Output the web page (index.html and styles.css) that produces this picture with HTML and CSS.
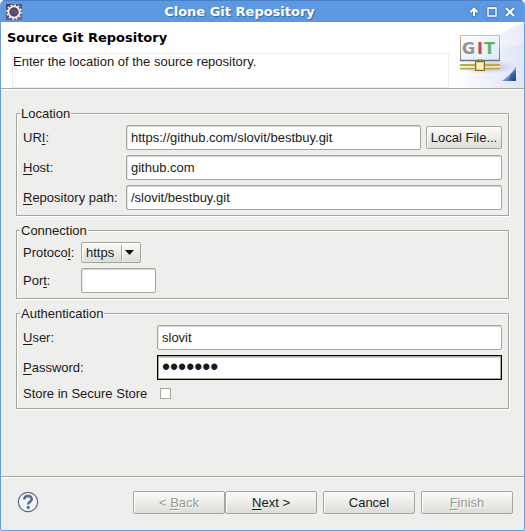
FILE: index.html
```html
<!DOCTYPE html>
<html lang="en">
<head>
<meta charset="utf-8">
<title>Clone Git Repository</title>
<link rel="stylesheet" href="styles.css">
</head>
<body>
<div class="window">
  <header class="titlebar">
    <svg class="app-icon" width="16" height="16" viewBox="0 0 16 16" aria-hidden="true">
      <defs>
        <linearGradient id="app" x1="0" y1="0" x2="1" y2="1">
          <stop offset="0" stop-color="#4a3f68"/><stop offset="1" stop-color="#77609a"/>
        </linearGradient>
      </defs>
      <rect width="16" height="16" fill="url(#app)"/>
      <circle cx="8" cy="8" r="7" fill="none" stroke="#efeaea" stroke-width="1.6" stroke-dasharray="1.9 1.765"/>
      <circle cx="8" cy="8" r="5.6" fill="#51446c" stroke="#f5f1ee" stroke-width="1.7"/>
      <path d="M4.5 6.5h7M4 8h8M4.5 9.6h7" stroke="#6a5a84" stroke-width=".8"/>
    </svg>
    <h1 class="window-title">Clone Git Repository</h1>
    <div class="window-controls">
      <button class="control" type="button" aria-label="Shade"><svg width="10" height="10" viewBox="0 0 10 10"><path d="M5 9V3M1.5 5.2 5 1.7l3.5 3.5" fill="none" stroke="#fff" stroke-width="2"/></svg></button>
      <button class="control" type="button" aria-label="Maximize"><svg width="10" height="10" viewBox="0 0 10 10"><path d="M1 1h8v8H1z" fill="none" stroke="#fff" stroke-width="1.4"/><path d="M1 1.3h8" stroke="#fff" stroke-width="1.6"/></svg></button>
      <button class="control" type="button" aria-label="Close"><svg width="10" height="10" viewBox="0 0 10 10"><path d="m1 1 8 8M9 1 1 9" stroke="#fff" stroke-width="2.2"/></svg></button>
    </div>
  </header>

  <section class="banner">
    <div class="banner-text">
      <h2 class="banner-title">Source Git Repository</h2>
      <p class="banner-message">Enter the location of the source repository.</p>
    </div>
    <svg class="banner-art" width="75" height="66" viewBox="0 0 75 66" role="img" aria-label="Git">
      <defs>
        <linearGradient id="sky" x1="0" y1="0" x2="1" y2="0">
          <stop offset="0" stop-color="#fff"/><stop offset="1" stop-color="#dbe2f5"/>
        </linearGradient>
        <linearGradient id="frame" x1="0" y1="0" x2="0" y2="1">
          <stop offset="0" stop-color="#e3b981"/><stop offset="1" stop-color="#6c8183"/>
        </linearGradient>
        <linearGradient id="panel" x1="0" y1="0" x2="1" y2="1">
          <stop offset="0" stop-color="#fff"/><stop offset="1" stop-color="#dceaf6"/>
        </linearGradient>
        <linearGradient id="fold" x1="0" y1="0" x2="1" y2="1">
          <stop offset=".4" stop-color="#c3d3ea"/><stop offset=".7" stop-color="#5279b4"/><stop offset="1" stop-color="#153d7d"/>
        </linearGradient>
        <radialGradient id="shade">
          <stop offset="0" stop-color="#a798b5" stop-opacity=".75"/><stop offset="1" stop-color="#b9aec8" stop-opacity="0"/>
        </radialGradient>
      </defs>
      <path d="M75 1C52 7 37 25 22 45 16 53 8 60 0 66h75z" fill="url(#sky)" opacity=".65"/>
      <path d="M75 22C53 23 40 35 29 49 23 57 15 62 5 66h70z" fill="url(#sky)" opacity=".75"/>
      <ellipse cx="37" cy="45" rx="31" ry="7" fill="url(#shade)"/>
      <rect x="11.500" y="13.500" width="39" height="25" fill="url(#panel)" stroke="url(#frame)"/>
      <path d="M11 38.500h40" stroke="#667a7c" stroke-width="1.4"/>
      <text class="git" y="32"><tspan x="13" fill="#929292">G</tspan><tspan x="28" fill="#bd4a50">I</tspan><tspan x="35" fill="#63b067">T</tspan></text>
      <path d="M11 43h40M11 46.500h40" stroke="#b5ab45" stroke-width="2"/>
      <path d="M11 45h40" stroke="#fffce4"/>
      <path d="M29.500 37v3M32.500 37v3" stroke="#8b7a30"/>
      <rect x="26.500" y="39.500" width="9" height="9" fill="#fff0b8" stroke="#8a6b24"/>
      <rect x="27.500" y="40.500" width="7" height="7" fill="none" stroke="#edce78"/>
      <path d="M67 44v15H52c6-3 11-8 15-15z" fill="url(#fold)"/>
      <path d="M61 53v5h5.500V48z" fill="#173d7b" opacity=".4"/>
    </svg>
  </section>

  <form class="form">
    <main class="page">
      <fieldset class="group location">
        <legend>Location</legend>
        <label for="uri">UR<u>I</u>:</label>
        <div class="with-button">
          <input class="field" id="uri" type="text" value="https://github.com/slovit/bestbuy.git">
          <button class="button compact" type="button">Local File...</button>
        </div>
        <label for="host"><u>H</u>ost:</label>
        <input class="field" id="host" type="text" value="github.com">
        <label for="path"><u>R</u>epository path:</label>
        <input class="field" id="path" type="text" value="/slovit/bestbuy.git">
      </fieldset>

      <fieldset class="group connection">
        <legend>Connection</legend>
        <label for="protocol">Protoco<u>l</u>:</label>
        <div class="picker">
          <select id="protocol"><option>https</option></select>
          <svg class="arrow" width="16" height="16" viewBox="0 0 16 16" aria-hidden="true"><path d="M.5 0v16" stroke="#a5a59d"/><path d="M1.500 0v16" stroke="#fff"/><path d="M4 5h9L8.500 10z" fill="#111"/></svg>
        </div>
        <label for="port">Por<u>t</u>:</label>
        <input class="field short" id="port" type="text">
      </fieldset>

      <fieldset class="group authentication">
        <legend>Authentication</legend>
        <label for="user"><u>U</u>ser:</label>
        <input class="field" id="user" type="text" value="slovit">
        <label for="password"><u>P</u>assword:</label>
        <input class="field focused" id="password" type="password" value="secrets">
        <label for="store">Store in Secure Store</label>
        <input class="check" id="store" type="checkbox">
      </fieldset>
    </main>

    <footer class="footer">
      <button class="help" type="button" aria-label="Help">
        <svg width="22" height="22" viewBox="0 0 22 22"><circle cx="11" cy="11" r="9.700" fill="#f3f3f5" stroke="#5d6e8e" stroke-width="1.200"/><path d="M7.300 8.600C7.300 3.800 14.700 4 14.700 8.200c0 2.600-3.500 2.500-3.500 5.300" fill="none" stroke="#596b91" stroke-width="2.600"/><circle cx="11.200" cy="16.400" r="1.600" fill="#596b91"/></svg>
      </button>
      <div class="actions">
        <div class="pair">
          <button class="button" type="button" disabled>&lt; <u>B</u>ack</button>
          <button class="button" type="button"><u>N</u>ext &gt;</button>
        </div>
        <button class="button" type="button">Cancel</button>
        <button class="button" type="submit" disabled><u>F</u>inish</button>
      </div>
    </footer>
  </form>
</div>
</body>
</html>
```
FILE: styles.css
```css
* { box-sizing: border-box; }

body {
  margin: 0;
  background: #fff;
  color: #1a1a1a;
  font: 13px/15px "Liberation Sans", Arial, sans-serif;
}

button, input, select { font: inherit; color: inherit; margin: 0; }
u { text-underline-offset: 2px; }

.window {
  display: flex;
  flex-direction: column;
  min-height: 100vh;
  border: 1px solid #6a9cdc;
  border-top: 0;
  border-radius: 5px 5px 2px 2px;
  background: #eeeeec;
  overflow: hidden;
}

.titlebar {
  display: grid;
  grid-template-columns: 24px 1fr 70px;
  align-items: center;
  height: 22px;
  background: #5d98e2;
  border-top: 1px solid #4a7fc4;
}
.app-icon { margin-left: 5px; }
.window-title {
  margin: 0;
  text-align: center;
  color: #fff;
  font: bold 13px/22px "DejaVu Sans", sans-serif;
  text-shadow: 1px 1px 1px #3d6aa8;
}
.window-controls { display: flex; justify-content: flex-end; gap: 8px; padding-right: 9px; }
.control { display: flex; padding: 0; border: 0; background: none; }
.control svg { filter: drop-shadow(0 0 1px #24539b); }

.banner {
  display: flex;
  background: #fff;
  border-bottom: 1px solid #a5a69d;
  box-shadow: 0 1px #fff;
}
.banner-text { flex: 1; display: flex; flex-direction: column; padding-left: 6px; }
.banner-title {
  margin: 8px 0 7px;
  font: bold 13px/16px "DejaVu Sans", sans-serif;
  color: #000;
}
.banner-message {
  flex: 1;
  margin: 0 0 0 5px;
  border: 1px solid #ececec;
}
.banner-art { display: block; }
.git { font: bold 16px "DejaVu Sans", sans-serif; }

.form { flex: 1; display: flex; flex-direction: column; }
.page {
  flex: 1;
  display: flex;
  flex-direction: column;
  gap: 7px;
  padding: 17px 15px 16px;
}

.group {
  display: grid;
  align-items: center;
  gap: 5px;
  min-width: 0;
  margin: 0;
  padding: 4px 6px 5px;
  border: 1px solid #a5a69f;
  box-shadow: 1px 1px #fff, inset 1px 1px #fff;
}
.group legend { padding: 0 1px; margin-left: -3px; background: #eeeeec; }
.location { grid-template-columns: 98px 1fr; }
.connection { grid-template-columns: 53px 1fr; }
.authentication { grid-template-columns: 129px 1fr; padding-bottom: 6px; }
.group label { white-space: nowrap; }

.with-button { display: flex; align-items: center; gap: 5px; }
.field {
  width: 100%;
  min-width: 0;
  height: 25px;
  padding: 0 4px;
  border: 1px solid #a5a69c;
  border-radius: 2px;
  background: #fff;
  box-shadow: inset 0 1px #d5d5ce, inset 1px 0 #e6e6e0;
  outline: 0;
}
.short { width: 75px; }
.focused {
  border-color: #000;
  border-radius: 0;
  box-shadow: inset 0 0 0 1px #a5a69c, inset 0 2px #d5d5ce;
  font-size: 23px;
}

.button {
  height: 23px;
  width: 92px;
  padding: 0;
  border: 1px solid #a5a69c;
  border-radius: 2px;
  background: linear-gradient(#fbfbfa, #dcddd7);
  box-shadow: inset 1px 1px #fff;
  white-space: nowrap;
}
.button:disabled { color: #989992; text-shadow: 1px 1px #fff; }
.compact { flex: none; width: 76px; }

.picker { display: grid; width: 60px; align-items: center; }
.picker > * { grid-area: 1 / 1; }
.picker select {
  appearance: none;
  height: 21px;
  width: 100%;
  padding: 0 20px 0 4px;
  border: 1px solid #a5a69c;
  border-radius: 2px;
  background: linear-gradient(#fbfbfa, #dcddd7);
  box-shadow: inset 1px 1px #fff;
}
.arrow { justify-self: end; margin-right: 4px; pointer-events: none; }

.check {
  appearance: none;
  width: 11px;
  height: 11px;
  margin: 3px;
  border: 1px solid #a5a69c;
  background: #fff;
}

.footer {
  display: flex;
  align-items: flex-start;
  justify-content: space-between;
  padding: 14px 11px 16px 16px;
  border-top: 1px solid #a5a69d;
  box-shadow: inset 0 1px #fff;
}
.help { display: flex; padding: 0; border: 0; background: none; }
.actions { display: flex; gap: 6px; }
.pair { display: flex; }
```
